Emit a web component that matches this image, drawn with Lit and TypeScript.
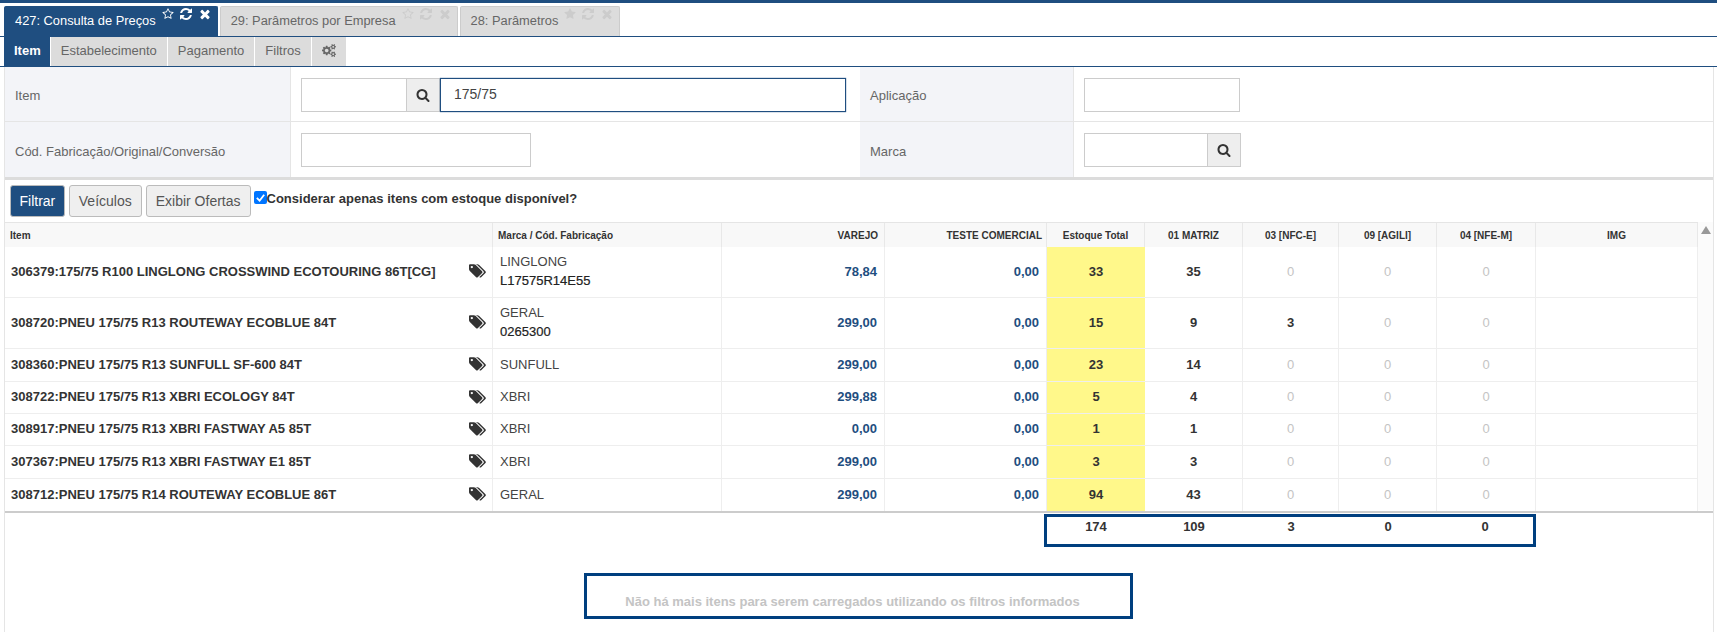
import { LitElement, html, css, svg } from "lit";
import { customElement } from "lit/decorators.js";

const P = {
  search: ["0 0 1792 1792", "M1216 832q0-185-131.5-316.5t-316.5-131.5-316.5 131.5-131.5 316.5 131.5 316.5 316.5 131.5 316.5-131.5 131.5-316.5zm512 832q0 52-38 90t-90 38q-54 0-90-38l-343-342q-179 124-399 124-143 0-273.5-55.5t-225-150-150-225-55.5-273.5 55.5-273.5 150-225 225-150 273.5-55.5 273.5 55.5 225 150 150 225 55.5 273.5q0 220-124 399l343 343q37 37 37 90z"],
  times: ["0 0 1792 1792", "M1490 1322q0 40-28 68l-136 136q-28 28-68 28t-68-28l-294-294-294 294q-28 28-68 28t-68-28l-136-136q-28-28-28-68t28-68l294-294-294-294q-28-28-28-68t28-68l136-136q28-28 68-28t68 28l294 294 294-294q28-28 68-28t68 28l136 136q28 28 28 68t-28 68l-294 294 294 294q28 28 28 68z"],
  refresh: ["0 0 1792 1792", "M1639 1056q0 5-1 7-64 268-268 434.5t-478 166.5q-146 0-282.5-55t-243.5-157l-129 129q-19 19-45 19t-45-19-19-45v-448q0-26 19-45t45-19h448q26 0 45 19t19 45-19 45l-137 137q71 66 161 102t187 36q134 0 250-65t186-179q11-17 53-117 8-23 30-23h192q13 0 22.5 9.5t9.5 22.5zm25-800v448q0 26-19 45t-45 19h-448q-26 0-45-19t-19-45 19-45l138-138q-148-137-349-137-134 0-250 65t-186 179q-11 17-53 117-8 23-30 23h-199q-13 0-22.5-9.5t-9.5-22.5v-7q65-268 270-434.5t480-166.5q146 0 284 55.5t245 156.5l130-129q19-19 45-19t45 19 19 45z"],
  star: ["0 0 1792 1792", "M1728 647q0 22-26 48l-363 354 86 500q1 7 1 20 0 21-10.5 35.5t-30.5 14.5q-19 0-40-12l-449-236-449 236q-22 12-40 12-21 0-31.5-14.5t-10.5-35.5q0-6 2-20l86-500-364-354q-25-27-25-48 0-37 56-46l502-73 225-455q19-41 49-41t49 41l225 455 502 73q56 9 56 46z"],
  starO: ["0 0 1792 1792", "M1201 1004l306-297-422-62-189-382-189 382-422 62 306 297-73 421 378-199 377 199zm527-357q0 22-26 48l-363 354 86 500q1 7 1 20 0 50-41 50-19 0-40-12l-449-236-449 236q-22 12-40 12-21 0-31.5-14.5t-10.5-35.5q0-6 2-20l86-500-364-354q-25-27-25-48 0-37 56-46l502-73 225-455q19-41 49-41t49 41l225 455 502 73q56 9 56 46z"],
  tags: ["0 0 1920 1792", "M448 448q0-53-37.5-90.5t-90.5-37.5-90.5 37.5-37.5 90.5 37.5 90.5 90.5 37.5 90.5-37.5 37.5-90.5zm1067 576q0 53-37 90l-491 492q-39 37-91 37-53 0-90-37l-715-716q-38-37-64.5-101t-26.5-117v-416q0-52 38-90t90-38h416q53 0 117 26.5t102 64.5l715 714q37 39 37 91zm384 0q0 53-37 90l-491 492q-39 37-91 37-36 0-59-14t-53-45l470-470q37-37 37-90 0-52-37-91l-715-714q-38-38-102-64.5t-117-26.5h224q53 0 117 26.5t102 64.5l715 714q37 39 37 91z"],
  cogs: ["0 0 1920 1792", "M896 896q0-106-75-181t-181-75-181 75-75 181 75 181 181 75 181-75 75-181zm768 512q0-52-38-90t-90-38-90 38-38 90q0 53 37.5 90.5t90.5 37.5 90.5-37.5 37.5-90.5zm0-1024q0-52-38-90t-90-38-90 38-38 90q0 53 37.5 90.5t90.5 37.5 90.5-37.5 37.5-90.5zm-384 421v185q0 10-7 19.5t-16 10.5l-155 24q-11 35-32 76 34 48 90 115 7 11 7 20 0 12-7 19-23 30-82.5 89.5t-78.5 59.5q-11 0-21-7l-115-90q-37 19-77 31-11 108-23 155-7 24-30 24h-186q-11 0-20-7.5t-10-17.5l-23-153q-34-10-75-31l-118 89q-7 7-20 7-11 0-21-8-144-133-144-160 0-9 7-19 10-14 41-53t47-61q-23-44-35-82l-152-24q-10-1-17-9.5t-7-19.5v-185q0-10 7-19.5t16-10.5l155-24q11-35 32-76-34-48-90-115-7-11-7-20 0-12 7-20 22-30 82-89t79-59q11 0 21 7l115 90q34-18 77-32 11-108 23-154 7-24 30-24h186q11 0 20 7.5t10 17.5l23 153q34 10 75 31l118-89q8-7 20-7 11 0 21 8 144 133 144 160 0 8-7 19-12 16-42 54t-45 60q23 48 34 82l152 23q10 2 17 10.5t7 19.5zm640 533v140q0 16-149 31-12 27-30 52 51 113 51 138 0 4-4 7-122 71-124 71-8 0-46-47t-52-68q-20 2-30 2t-30-2q-14 21-52 68t-46 47q-2 0-124-71-4-3-4-7 0-25 51-138-18-25-30-52-149-15-149-31v-140q0-16 149-31 13-29 30-52-51-113-51-138 0-4 4-7 4-2 35-20t59-34 30-16q8 0 46 46.5t52 67.5q20-2 30-2t30 2q51-71 92-112l6-2q4 0 124 70 4 3 4 7 0 25-51 138 17 23 30 52 149 15 149 31zm0-1024v140q0 16-149 31-12 27-30 52 51 113 51 138 0 4-4 7-122 71-124 71-8 0-46-47t-52-68q-20 2-30 2t-30-2q-14 21-52 68t-46 47q-2 0-124-71-4-3-4-7 0-25 51-138-18-25-30-52-149-15-149-31v-140q0-16 149-31 13-29 30-52-51-113-51-138 0-4 4-7 4-2 35-20t59-34 30-16q8 0 46 46.5t52 67.5q20-2 30-2t30 2q51-71 92-112l6-2q4 0 124 70 4 3 4 7 0 25-51 138 17 23 30 52 149 15 149 31z"],
};
type IconName = keyof typeof P;
const icon = (n: IconName, cls = "") => html`<svg class="ic ${cls}" viewBox=${P[n][0]} aria-hidden="true">${svg`<path d=${P[n][1]}></path>`}</svg>`;

interface Row { item: string; brand: string; code?: string; price: string; test: string; total: string; st: string[]; h: string; }
const rows: Row[] = [
  { item: "306379:175/75 R100 LINGLONG CROSSWIND ECOTOURING 86T[CG]", brand: "LINGLONG", code: "L17575R14E55", price: "78,84", test: "0,00", total: "33", st: ["35", "0", "0", "0"], h: "h51" },
  { item: "308720:PNEU 175/75 R13 ROUTEWAY ECOBLUE 84T", brand: "GERAL", code: "0265300", price: "299,00", test: "0,00", total: "15", st: ["9", "3", "0", "0"], h: "h51" },
  { item: "308360:PNEU 175/75 R13 SUNFULL SF-600 84T", brand: "SUNFULL", price: "299,00", test: "0,00", total: "23", st: ["14", "0", "0", "0"], h: "h33" },
  { item: "308722:PNEU 175/75 R13 XBRI ECOLOGY 84T", brand: "XBRI", price: "299,88", test: "0,00", total: "5", st: ["4", "0", "0", "0"], h: "h32" },
  { item: "308917:PNEU 175/75 R13 XBRI FASTWAY A5 85T", brand: "XBRI", price: "0,00", test: "0,00", total: "1", st: ["1", "0", "0", "0"], h: "h32" },
  { item: "307367:PNEU 175/75 R13 XBRI FASTWAY E1 85T", brand: "XBRI", price: "299,00", test: "0,00", total: "3", st: ["3", "0", "0", "0"], h: "h33" },
  { item: "308712:PNEU 175/75 R14 ROUTEWAY ECOBLUE 86T", brand: "GERAL", price: "299,00", test: "0,00", total: "94", st: ["43", "0", "0", "0"], h: "last" },
];

@customElement("app-root")
export class AppRoot extends LitElement {
  static styles = css`
    :host { display: block; height: 632px; overflow: hidden; background: #fff; color: #333;
      font-family: "Liberation Sans", Arial, sans-serif; font-size: 13px;
      --navy: #1f4e80; --cols: 488px 229px 163px 162px 98px 98px 96px 98px 99px 162px; }
    .ic { display: block; fill: currentColor; flex: none; }
    .topbar { height: 3px; background: var(--navy); }
    .tabs { display: flex; gap: 2px; padding: 3px 0 0 4px; height: 34px; box-sizing: border-box; border-bottom: 1px solid var(--navy); }
    .tab { display: flex; height: 30px; box-sizing: border-box; padding: 0 5px 0 10px; background: #dcdcdc; color: #666; border: 1px solid #ccc; border-bottom: 0; border-radius: 2px 2px 0 0; font-size: 12.85px; line-height: 27px; white-space: nowrap; }
    .tab.on { background: var(--navy); color: #fff; border-color: var(--navy); }
    .tab-ic { display: flex; align-items: center; gap: 5px; height: 14px; padding-left: 6px; color: #ccc; }
    .tab.on .tab-ic { color: #fff; }
    .tab-ic .ic { width: 14px; height: 14px; }
    .tab-ic .s { width: 12px; height: 12px; }
    .sub { display: flex; height: 30px; box-sizing: border-box; border-bottom: 1px solid var(--navy); padding-left: 4px; }
    .sub div { display: flex; align-items: center; padding: 0 10px 3px; background: #dcdcdc; color: #666; border-right: 1px solid #fff; font-size: 13px; }
    .sub div.on { background: var(--navy); color: #fff; font-weight: 700; padding: 0 9px 3px 10px; }
    .sub .ic { width: 14px; height: 13px; color: #666; }
    .panel { margin-left: 4px; width: 1710px; height: 565px; box-sizing: border-box; border: solid #e5e5e5; border-width: 0 1px; }
    .form { border-bottom: 3px solid #dcdcdc; display: grid; grid-template-columns: 286px 569px 214px 1fr; grid-auto-rows: 55px; }
    .lab, .val { border-bottom: 1px solid #e5e5e5; display: flex; }
    .lab { background: #f3f4f8; color: #666; padding: 3px 0 0 10px; border-right: 1px solid #e5e5e5; align-items: center; }
    .val { padding: 11px 0 0 10px; align-items: flex-start; }
    .form > :nth-last-child(-n+4) { border-bottom: 0; }
    .inp { height: 34px; box-sizing: border-box; border: 1px solid #ccc; background: #fff; color: #444; padding-left: 13px; line-height: 30px; font-size: 14px; }
    .btn-s { width: 33px; height: 34px; box-sizing: border-box; background: #eee; border: 1px solid #ccc; border-left: 0; display: flex; align-items: center; justify-content: center; color: #333; }
    .btn-s .ic { width: 14px; height: 14px; }
    .inp.focus { border: 1px solid var(--navy); box-shadow: 0 0 1px var(--navy); }
    .w106 { width: 106px; } .w406 { width: 406px; } .w156 { width: 156px; } .w230 { width: 230px; } .w124 { width: 124px; }
    .actions { display: flex; gap: 4px; padding: 5px 0 0 5px; height: 42px; box-sizing: border-box; }
    .b { height: 32px; box-sizing: border-box; border: 1px solid #bbb; border-radius: 3px; background: #efefef; color: #555; padding: 0 9px; display: flex; align-items: center; font-size: 14px; }
    .b.on { background: var(--navy); border-color: #bbb; color: #fff; padding: 0 8.5px; }
    .chk { display: flex; align-items: flex-start; font-size: 13px; font-weight: 700; color: #333; line-height: 19px; padding-top: 4px; margin-left: -1px; }
    .box { width: 13px; height: 13px; margin: 2px 0 0 0; background: #0075ff; border-radius: 2px; color: #fff; display: flex; align-items: center; justify-content: center; }
    .box svg { width: 11px; height: 11px; fill: none; stroke: #fff; stroke-width: 2; }
    .grid-wrap { display: flex; }
    .table { width: 1693px; border-top: 1px solid #e5e5e5; }
    .r { display: grid; grid-template-columns: var(--cols); }
    .r > div { display: flex; align-items: center; justify-content: center; border-right: 1px solid #eee; font-size: 13px; font-weight: 700; color: #333; box-sizing: border-box; }
    .head { height: 24px; background: #f8f8f8; }
    .r.head > div { font-size: 10px; border-right: 1px solid #e8e8e8; }
    .r.head > .l { justify-content: flex-start; padding-left: 5px; }
    .r.head > .rt { justify-content: flex-end; padding-right: 6px; }
    .r.head > .rt5 { padding-right: 4px; }
    .row { box-sizing: border-box; border-bottom: 1px solid #eee; }
    .row > div { padding-bottom: 2px; }
    .h51 { height: 51px; } .h33 { height: 33px; } .h32 { height: 32px; }
    .last { height: 34px; border-bottom: 2px solid #ccc; width: 1708px; }
    .r > .it { justify-content: space-between; padding: 0 6px 2px 6px; }
    .it .ic { width: 17px; height: 16px; color: #333; }
    .r > .brand-cell { flex-direction: column; align-items: flex-start; padding-left: 7px; font-weight: 400; line-height: 19px; color: #444; }
    .brand-cell b { font-weight: 400; color: #222; -webkit-text-stroke: 0.2px #222; }
    .r > .num { justify-content: flex-end; padding-right: 7px; color: var(--navy); }
    .r > .tot { background: #fff88a; border-right: 0; }
    .r > .zero { color: #c4c4c4; font-weight: 400; }
    .scroll { width: 15px; display: flex; justify-content: center; padding-top: 4px; box-sizing: border-box; background: #fbfbfb; height: 288px; }
    .arrow { width: 0; height: 0; border-left: 5px solid transparent; border-right: 5px solid transparent; border-bottom: 8px solid #999; }
    .foot { display: grid; grid-template-columns: var(--cols); margin: 1px 0 0 0; width: 1693px; }
    .tbox { grid-column: 5 / 10; margin-left: -3px; height: 33px; box-sizing: border-box; border: 3px solid #003f7f; display: grid; grid-template-columns: 98px 98px 96px 98px 96px; font-size: 13px; font-weight: 700; color: #333; }
    .tbox span { text-align: center; padding-top: 2px; line-height: 16px; }
    .msgwrap { display: flex; margin: 26px 0 0 579px; }
    .msg { width: 549px; height: 46px; box-sizing: border-box; border: 3px solid #003f7f; color: #c4c4c4; font-weight: 700; font-size: 13px; text-align: center; padding: 18px 12px 0 0; line-height: 16px; }
  `;

  render() {
    const tabs: [string, IconName, boolean][] = [
      ["427: Consulta de Preços", "starO", true],
      ["29: Parâmetros por Empresa", "starO", false],
      ["28: Parâmetros", "star", false],
    ];
    return html`
      <div class="topbar"></div>
      <div class="tabs">
        ${tabs.map(([t, s, on]) => html`<div class="tab ${on ? "on" : ""}"><span>${t}</span>
          <span class="tab-ic">${icon(s, "s")}${icon("refresh")}${icon("times")}</span></div>`)}
      </div>
      <div class="sub">
        <div class="on">Item</div><div>Estabelecimento</div><div>Pagamento</div><div>Filtros</div><div>${icon("cogs")}</div>
      </div>
      <div class="panel">
        <div class="form">
          <div class="lab">Item</div>
          <div class="val"><div class="inp w106"></div><div class="btn-s">${icon("search")}</div><div class="inp focus w406">175/75</div></div>
          <div class="lab">Aplicação</div>
          <div class="val"><div class="inp w156"></div></div>
          <div class="lab">Cód. Fabricação/Original/Conversão</div>
          <div class="val"><div class="inp w230"></div></div>
          <div class="lab">Marca</div>
          <div class="val"><div class="inp w124"></div><div class="btn-s">${icon("search")}</div></div>
        </div>
        <div class="actions">
          <div class="b on">Filtrar</div><div class="b">Veículos</div><div class="b">Exibir Ofertas</div>
          <div class="chk"><span class="box"><svg viewBox="0 0 12 12"><path d="M2 6.5 5 9.5 10 3"></path></svg></span>Considerar apenas itens com estoque disponível?</div>
        </div>
        <div class="grid-wrap">
          <div class="table">
            <div class="r head">
              <div class="l">Item</div><div class="l">Marca / Cód. Fabricação</div><div class="rt">VAREJO</div><div class="rt rt5">TESTE COMERCIAL</div>
              <div>Estoque Total</div><div>01 MATRIZ</div><div>03 [NFC-E]</div><div>09 [AGILI]</div><div>04 [NFE-M]</div><div>IMG</div>
            </div>
            ${rows.map((r) => html`
              <div class="r row ${r.h}">
                <div class="it"><span>${r.item}</span>${icon("tags")}</div>
                <div class="brand-cell"><span>${r.brand}</span>${r.code ? html`<b>${r.code}</b>` : ""}</div>
                <div class="num">${r.price}</div>
                <div class="num">${r.test}</div>
                <div class="tot">${r.total}</div>
                ${r.st.map((v) => html`<div class=${v === "0" ? "zero" : ""}>${v}</div>`)}
                <div></div>
              </div>`)}
          </div>
          <div class="scroll"><div class="arrow"></div></div>
        </div>
        <div class="foot"><div class="tbox"><span>174</span><span>109</span><span>3</span><span>0</span><span>0</span></div></div>
        <div class="msgwrap"><div class="msg">Não há mais itens para serem carregados utilizando os filtros informados</div></div>
      </div>
    `;
  }
}
